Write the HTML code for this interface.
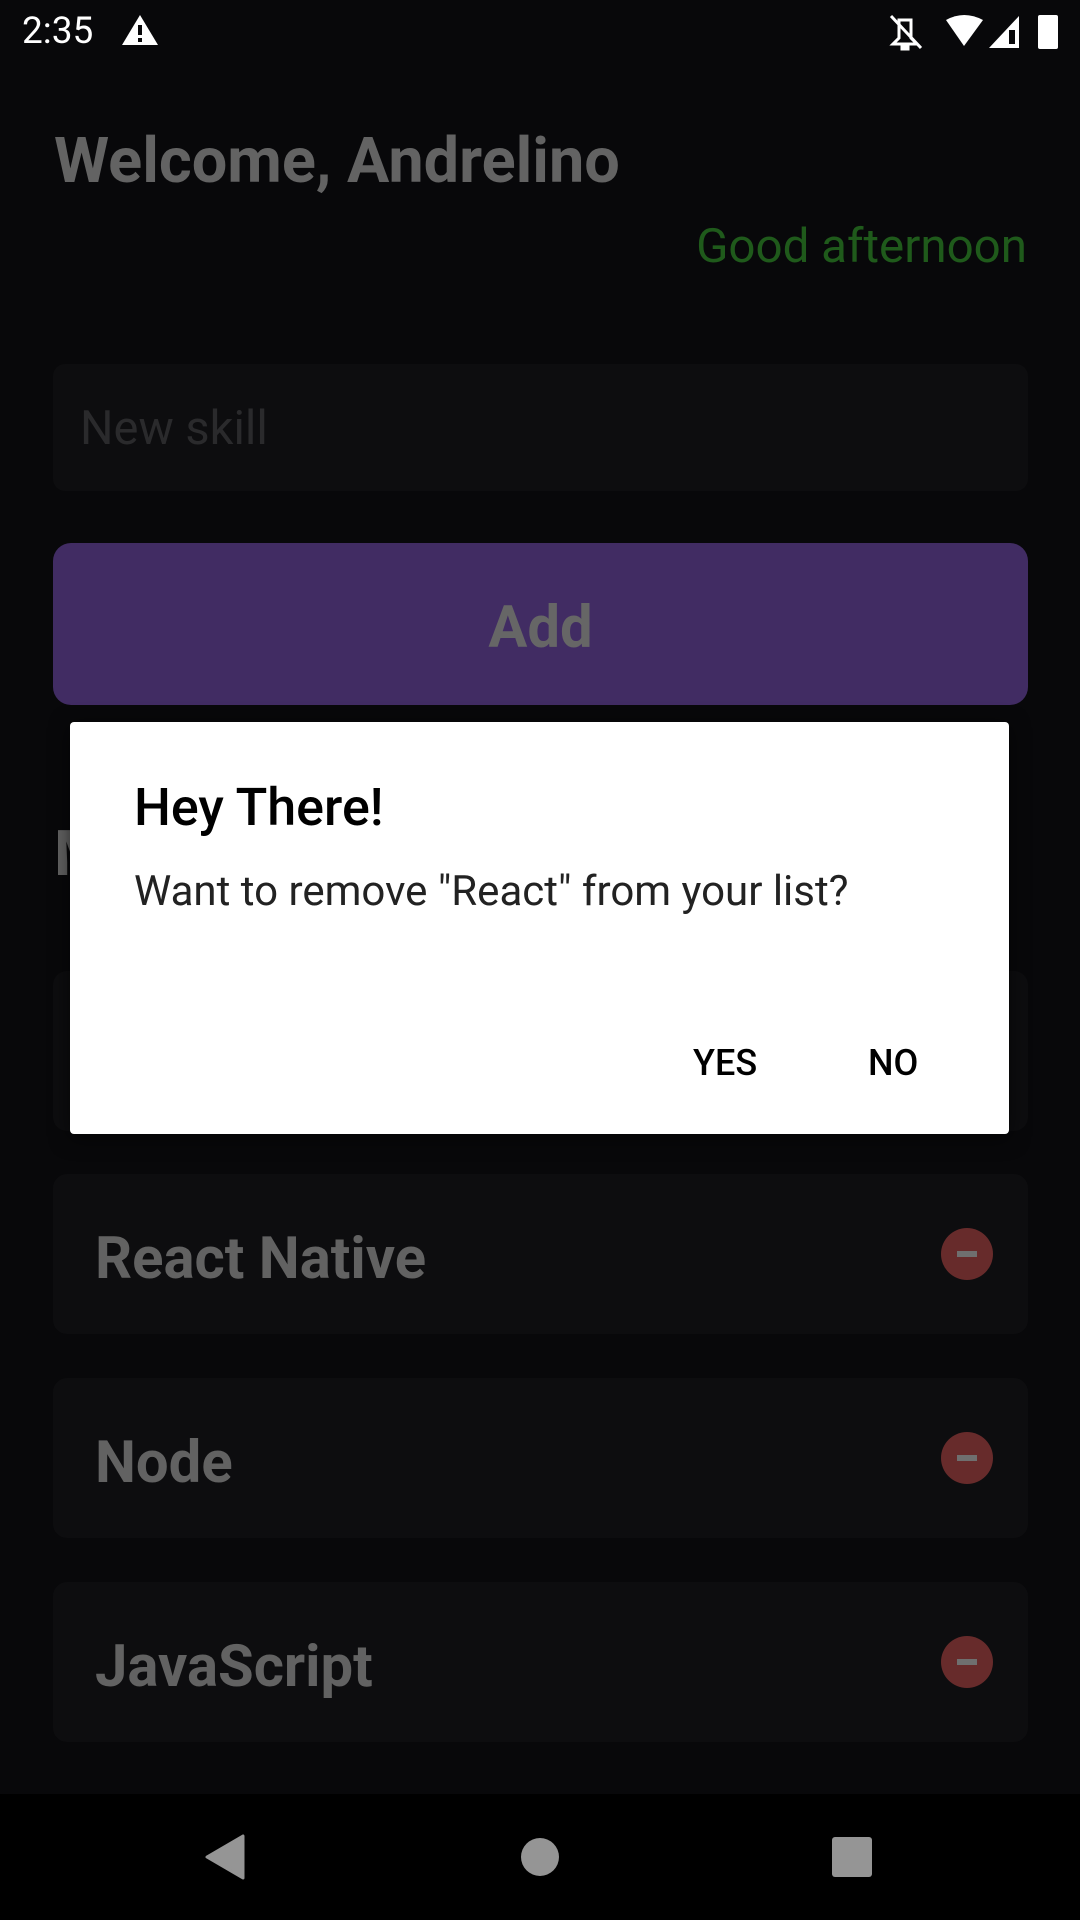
<!DOCTYPE html>
<html><head><meta charset="utf-8"><style>
*{margin:0;padding:0;box-sizing:border-box}
body{width:1080px;height:1920px;background:#08080a;position:relative;overflow:hidden;font-family:"Roboto","Liberation Sans",sans-serif}
.a{position:absolute;white-space:nowrap}
.card{position:absolute;left:53px;width:975px;height:160px;background:#0d0d0f;border-radius:14px}
.sk{position:absolute;left:42px;top:5px;line-height:160px;font-size:58px;font-weight:bold;color:#626262}
.rm{position:absolute;left:888px;top:54px;width:52px;height:52px;border-radius:50%;background:#672b2b}
.rm:after{content:"";position:absolute;left:16px;top:23px;width:20px;height:6px;background:#6f6f6f}
</style></head><body>
<div class="a" style="left:22px;top:10px;font-size:37px;color:#fff;line-height:44px">2:35</div>
<svg class="a" style="left:120px;top:13px" width="40" height="34" viewBox="0 0 40 34"><path d="M20 2 L38 32 L2 32 Z" fill="#fff"/><rect x="18" y="12" width="4" height="10" fill="#08080a"/><rect x="18" y="25" width="4" height="4" fill="#08080a"/></svg>
<svg class="a" style="left:885px;top:12px" width="180" height="40" viewBox="0 0 180 40">
<path d="M14 8 L26 8 L26 26 L32 32 L8 32 L14 26Z M17 34 h6 v3 h-6z" fill="none" stroke="#fff" stroke-width="3"/><line x1="6" y1="4" x2="36" y2="36" stroke="#fff" stroke-width="3"/>
<path d="M61 8 Q79 -2 98 8 L79 34 Z" fill="#fff"/>
<path d="M134 4 L134 36 L104 36 Z" fill="#fff"/><rect x="124" y="18" width="6" height="14" fill="#08080a"/>
<rect x="153" y="3" width="20" height="34" rx="2" fill="#fff"/>
</svg>
<div class="a" style="left:54px;top:122px;font-size:63px;font-weight:bold;color:#636363;line-height:80px">Welcome, Andrelino</div>
<div class="a" style="right:53px;top:218px;font-size:47.5px;color:#1f5a1b;line-height:56px">Good afternoon</div>
<div class="a" style="left:53px;top:364px;width:975px;height:127px;background:#0d0d0f;border-radius:12px"></div>
<div class="a" style="left:80px;top:401px;font-size:47px;color:#2a2a2c;line-height:56px">New skill</div>
<div class="a" style="left:53px;top:543px;width:975px;height:162px;background:#412c63;border-radius:18px;text-align:center;line-height:170px;font-size:58px;font-weight:bold;color:#666">Add</div>
<div class="a" style="left:54px;top:820px;font-size:63px;font-weight:bold;color:#636363;line-height:70px">My Skills</div>
<div class="card" style="top:971px"><div class="sk">React</div><div class="rm"></div></div>
<div class="card" style="top:1174px"><div class="sk">React Native</div><div class="rm"></div></div>
<div class="card" style="top:1378px"><div class="sk">Node</div><div class="rm"></div></div>
<div class="card" style="top:1582px"><div class="sk">JavaScript</div><div class="rm"></div></div>
<div class="a" style="left:70px;top:722px;width:939px;height:412px;background:#fff;border-radius:4px;box-shadow:0 4px 20px rgba(0,0,0,.6)">
<div class="a" style="left:64px;top:54px;font-size:52px;font-weight:500;color:#000;line-height:64px">Hey There!</div>
<div class="a" style="left:64px;top:143px;font-size:42px;color:#222;line-height:54px">Want to remove "React" from your list?</div>
<div class="a" style="left:623px;top:319px;font-size:36px;font-weight:500;color:#000;line-height:44px">YES</div>
<div class="a" style="left:798px;top:319px;font-size:36px;font-weight:500;color:#000;line-height:44px">NO</div>
</div>
<div class="a" style="left:0;top:1794px;width:1080px;height:126px;background:#000"></div>
<svg class="a" style="left:0;top:1794px" width="1080" height="126"><path d="M243 42 L243 84 L207 63 Z" fill="#959595" stroke="#959595" stroke-width="3" stroke-linejoin="round"/><circle cx="540" cy="63" r="19" fill="#959595"/><rect x="832" y="43" width="40" height="40" rx="3" fill="#959595"/></svg>
</body></html>
